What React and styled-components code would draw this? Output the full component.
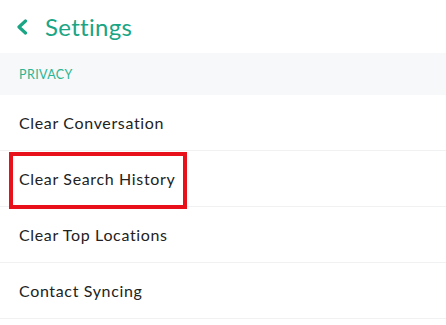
import styled, { createGlobalStyle } from "styled-components";

const GlobalStyle = createGlobalStyle`
  html, body {
    margin: 0;
    padding: 0;
    background: #ffffff;
  }
  body {
    font-family: Lato, "Noto Sans", sans-serif;
  }
`;

const Page = styled.div`
  width: 446px;
  height: 325px;
  overflow: hidden;
  background: #ffffff;
`;

const Header = styled.div`
  height: 53px;
  display: flex;
  align-items: center;
  padding-left: 16px;
  gap: 17px;
  color: #1aa584;
`;

const Title = styled.h1`
  margin: 0;
  font-size: 24px;
  font-weight: 400;
  letter-spacing: 0.3px;
`;

const Section = styled.div`
  height: 42px;
  display: flex;
  align-items: center;
  padding-left: 19px;
  background: #f6f8f9;
  color: #2bb592;
  font-size: 12.5px;
  letter-spacing: 0.4px;
`;

const List = styled.ul`
  list-style: none;
  margin: 0;
  padding: 0;
`;

const Row = styled.li`
  position: relative;
  height: 55px;
  display: flex;
  align-items: center;
  padding-left: 19px;
  border-bottom: 1px solid #f0f1f2;
  color: #222222;
  font-size: 16px;
  letter-spacing: 0.65px;
`;

const Highlight = styled.span`
  position: absolute;
  left: 9px;
  top: 1px;
  width: 178px;
  height: 57px;
  box-sizing: border-box;
  border: 4px solid #e8101a;
`;

const Chevron = () => (
  <svg width="12" height="16" viewBox="0 0 12 16" fill="none">
    <path
      d="M9.5 2 L3 8 L9.5 14"
      stroke="currentColor"
      strokeWidth="3.2"
      strokeLinecap="round"
      strokeLinejoin="round"
    />
  </svg>
);

const items = [
  { label: "Clear Conversation" },
  { label: "Clear Search History", marked: true },
  { label: "Clear Top Locations" },
  { label: "Contact Syncing" },
];

export default function App() {
  return (
    <Page>
      <GlobalStyle />
      <Header>
        <Chevron />
        <Title>Settings</Title>
      </Header>
      <Section>PRIVACY</Section>
      <List>
        {items.map((item) => (
          <Row key={item.label}>
            {item.label}
            {item.marked && <Highlight />}
          </Row>
        ))}
      </List>
    </Page>
  );
}
